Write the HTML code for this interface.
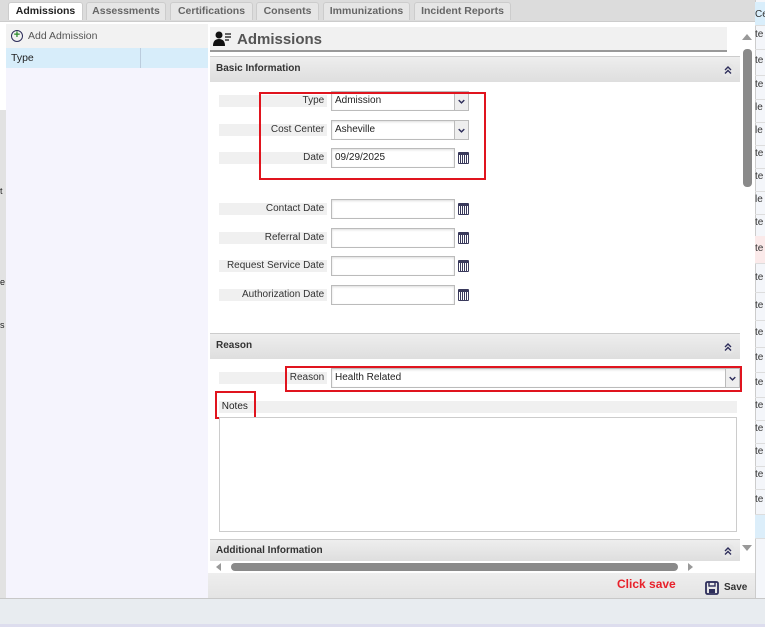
<!DOCTYPE html>
<html><head><meta charset="utf-8"><style>
*{margin:0;padding:0;box-sizing:border-box}
body{width:765px;height:627px;overflow:hidden;background:#fff;font-family:"Liberation Sans",Arial,sans-serif;font-size:10px;color:#222;position:relative}
.a{position:absolute}
.tab{position:absolute;top:2px;height:18px;background:#e6e6e6;border:1px solid #ccc;border-bottom:none;border-radius:3px 3px 0 0;font-weight:bold;color:#666;font-size:10.5px;text-align:center;line-height:17px}
.bar{position:absolute;left:210px;width:530px;background:linear-gradient(#eee,#dedede);border-top:1px solid #ccc;font-weight:bold;font-size:10px;color:#333;padding-left:6px}
.chev{position:absolute;right:5px;top:50%;margin-top:-7px;width:14px;height:14px;border-radius:50%;background:#e6e6e6}
.lbl{position:absolute;left:219px;width:108px;height:12px;background:#f0f0f0;text-align:right;font-size:10px;line-height:12px;color:#333}
.inp{position:absolute;left:331px;width:124px;height:20px;border:1px solid #bbb;background:#fff;font-size:10px;line-height:18px;padding-left:3px;box-shadow:inset 0 1px 2px #ddd}
.sel{width:138px}
.arr{position:absolute;right:0;top:0;width:14px;height:18px;border-left:1px solid #bbb;background:#eee}
.cal{position:absolute;left:458px;width:11px;height:12px;border:1.5px solid #3a3a5c;border-top-width:3px;border-radius:1px;background:repeating-linear-gradient(90deg,#fff 0 1px,#3a3a5c 1px 2px)}
.red{position:absolute;border:2px solid #e0141e}
.rs{position:absolute;left:755px;width:10px;height:28px;border-bottom:1px solid #ddd;font-size:10px;overflow:hidden;line-height:26px;color:#333}
</style></head><body>
<svg width="0" height="0" style="position:absolute"><defs>
<symbol id="dc" viewBox="0 0 14 14"><path d="M4 7l3-3 3 3M4 10.5l3-3 3 3" fill="none" stroke="#2d2d5a" stroke-width="1.4"/></symbol>
<symbol id="dn" viewBox="0 0 14 18"><path d="M4 8l3 3 3-3" fill="none" stroke="#2d2d5a" stroke-width="1.5"/></symbol>
</defs></svg>
<div class="a" style="left:0;top:0;width:755px;height:22px;background:#dcdcdc;border-bottom:1px solid #ccc"></div>
<div class="tab" style="left:8px;width:75px;background:#fff;color:#222">Admissions</div>
<div class="tab" style="left:86px;width:80px">Assessments</div>
<div class="tab" style="left:170px;width:83px">Certifications</div>
<div class="tab" style="left:256px;width:63px">Consents</div>
<div class="tab" style="left:323px;width:87px">Immunizations</div>
<div class="tab" style="left:414px;width:97px">Incident Reports</div>

<div class="a" style="left:0;top:110px;width:6px;height:488px;background:#e2e2e2"></div>
<div class="a" style="left:0;top:186px;font-size:9px">t</div>
<div class="a" style="left:0;top:277px;font-size:9px">e</div>
<div class="a" style="left:0;top:320px;font-size:9px">s</div>
<div class="a" style="left:6px;top:24px;width:202px;height:574px;background:#f5f4fd"></div>
<div class="a" style="left:6px;top:24px;width:202px;height:24px;background:#f2f2f2"></div>
<div class="a" style="left:11px;top:30px;width:12px;height:12px;border:1.5px solid #2d2d5a;border-radius:50%;color:#2a8a2a;font-size:11px;line-height:8px;text-align:center;font-weight:bold">+</div>
<div class="a" style="left:28px;top:30px;font-size:10.5px;color:#555">Add Admission</div>
<div class="a" style="left:6px;top:48px;width:202px;height:20px;background:#d7edfa"></div>
<div class="a" style="left:140px;top:48px;width:1px;height:20px;background:#bcd"></div>
<div class="a" style="left:11px;top:52px;font-size:10.5px">Type</div>

<div class="a" style="left:208px;top:24px;width:547px;height:550px;background:#fff"></div>
<div class="a" style="left:210px;top:27px;width:517px;height:25px;background:#f1f1f1;border-bottom:2px solid #999"></div>
<svg class="a" style="left:213px;top:31px" width="20" height="16" viewBox="0 0 20 16"><circle cx="6" cy="4" r="3.5" fill="#111"/><path d="M0 15 Q0 8 6 8 Q12 8 12 15Z" fill="#111"/><path d="M12 3h6M12 6h6M12 9h4" stroke="#111" stroke-width="1.2"/></svg>
<div class="a" style="left:237px;top:31px;font-size:15px;font-weight:bold;color:#555">Admissions</div>

<div class="bar" style="top:56px;height:26px;line-height:24px">Basic Information<svg class="chev"><use href="#dc"/></svg></div>

<div class="lbl" style="top:95px">Type&nbsp;</div><div class="inp sel" style="top:91px">Admission<svg class="arr"><use href="#dn"/></svg></div>
<div class="lbl" style="top:124px">Cost Center&nbsp;</div><div class="inp sel" style="top:120px">Asheville<svg class="arr"><use href="#dn"/></svg></div>
<div class="lbl" style="top:152px">Date&nbsp;</div><div class="inp" style="top:148px">09/29/2025</div><div class="cal" style="top:152px"></div>
<div class="red" style="left:259px;top:92px;width:227px;height:88px"></div>
<div class="lbl" style="top:203px">Contact Date&nbsp;</div><div class="inp" style="top:199px"></div><div class="cal" style="top:203px"></div>
<div class="lbl" style="top:232px">Referral Date&nbsp;</div><div class="inp" style="top:228px"></div><div class="cal" style="top:232px"></div>
<div class="lbl" style="top:260px">Request Service Date&nbsp;</div><div class="inp" style="top:256px"></div><div class="cal" style="top:260px"></div>
<div class="lbl" style="top:289px">Authorization Date&nbsp;</div><div class="inp" style="top:285px"></div><div class="cal" style="top:289px"></div>

<div class="bar" style="top:333px;height:26px;line-height:24px">Reason<svg class="chev"><use href="#dc"/></svg></div>
<div class="lbl" style="top:372px;width:108px">Reason&nbsp;</div>
<div class="inp" style="top:368px;width:409px">Health Related<svg class="arr"><use href="#dn"/></svg></div>
<div class="red" style="left:285px;top:366px;width:457px;height:26px"></div>
<div class="a" style="left:219px;top:401px;width:518px;height:12px;background:#f0f0f0;font-size:10px;line-height:11px">&nbsp;Notes</div>
<div class="red" style="left:215px;top:391px;width:41px;height:28px"></div>
<div class="a" style="left:219px;top:417px;width:518px;height:115px;border:1px solid #ccc;background:#fff"></div>

<div class="bar" style="top:539px;height:22px;line-height:21px">Additional Information<svg class="chev"><use href="#dc"/></svg></div>
<div class="a" style="left:210px;top:561px;width:530px;height:12px;background:#fff"></div>
<div class="a" style="left:216px;top:563px;width:0;height:0;border:4px solid transparent;border-right:5px solid #999;border-left:none"></div>
<div class="a" style="left:231px;top:563px;width:447px;height:8px;border-radius:4px;background:#8a8a8a"></div>
<div class="a" style="left:688px;top:563px;width:0;height:0;border:4px solid transparent;border-left:5px solid #999;border-right:none"></div>
<div class="a" style="left:208px;top:573px;width:547px;height:25px;background:linear-gradient(#eee,#e4e4e4)"></div>
<div class="a" style="left:617px;top:577px;font-size:12px;font-weight:bold;color:#e8202a">Click save</div>
<svg class="a" style="left:705px;top:581px" width="14" height="14" viewBox="0 0 14 14"><rect x="1" y="1" width="12" height="12" rx="1.5" fill="none" stroke="#2d2d5a" stroke-width="1.8"/><rect x="4" y="1" width="6" height="4" fill="none" stroke="#2d2d5a" stroke-width="1.4"/><rect x="4" y="8" width="6" height="4" fill="#2d2d5a"/></svg>
<div class="a" style="left:724px;top:582px;font-size:10px;font-weight:bold;color:#333">Save</div>

<div class="a" style="left:742px;top:34px;width:0;height:0;border:5px solid transparent;border-bottom:6px solid #999;border-top:none"></div>
<div class="a" style="left:743px;top:49px;width:9px;height:138px;border-radius:4px;background:#8a8a8a"></div>
<div class="a" style="left:742px;top:545px;width:0;height:0;border:5px solid transparent;border-top:6px solid #999;border-bottom:none"></div>

<div class="a" style="left:755px;top:0;width:10px;height:598px;background:#f4f6fa;border-left:1px solid #ccc"></div>
<div class="rs" style="top:2px;height:24px;background:#d9eefb">Ce</div>
<div class="rs" style="top:22px">te</div><div class="rs" style="top:48px">te</div><div class="rs" style="top:72px">te</div>
<div class="rs" style="top:95px">le</div><div class="rs" style="top:118px">le</div><div class="rs" style="top:141px">te</div>
<div class="rs" style="top:164px">te</div><div class="rs" style="top:187px">le</div><div class="rs" style="top:210px">te</div>
<div class="rs" style="top:236px;background:#fbeaea">te</div><div class="rs" style="top:265px">te</div><div class="rs" style="top:293px">te</div>
<div class="rs" style="top:320px">te</div><div class="rs" style="top:345px">te</div><div class="rs" style="top:370px">te</div>
<div class="rs" style="top:393px">te</div><div class="rs" style="top:416px">te</div><div class="rs" style="top:439px">te</div>
<div class="rs" style="top:462px">te</div><div class="rs" style="top:487px">te</div>
<div class="rs" style="top:515px;background:#dceefa;height:24px"></div>

<div class="a" style="left:0;top:598px;width:765px;height:29px;background:#e8ecf0;border-top:1px solid #c8c8c8"></div>
<div class="a" style="left:0;top:624px;width:765px;height:3px;background:#dde"></div>
</body></html>
